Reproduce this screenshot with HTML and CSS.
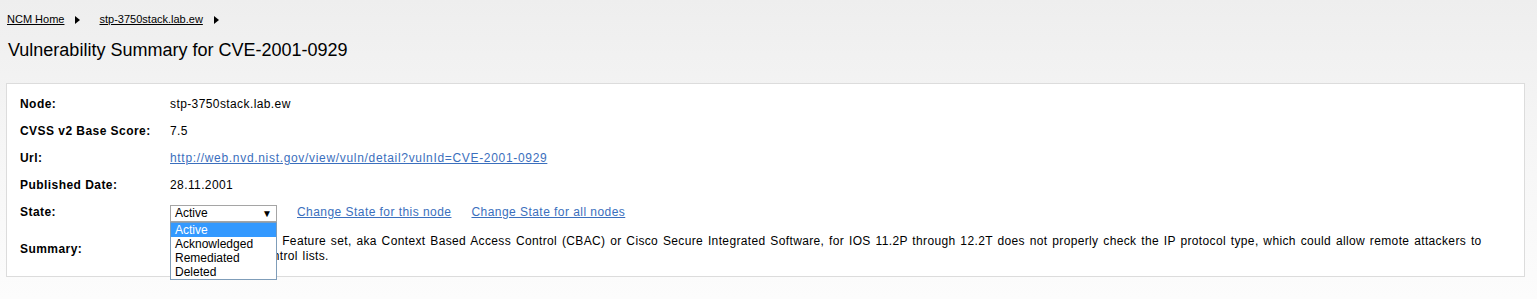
FILE: index.html
```html
<!DOCTYPE html>
<html>
<head>
    <title>Vulnerability Summary for CVE-2001-0929</title>
    <link rel="stylesheet" href="styles.css">
</head>
<body>
    <div class="breadcrumb">
        <a href="#">NCM Home</a><span class="crumb-arrow"></span>
        <a href="#">stp-3750stack.lab.ew</a><span class="crumb-arrow"></span>
    </div>

    <h1>Vulnerability Summary for CVE-2001-0929</h1>

    <div class="summary-box">
        <table class="details">
            <tr>
                <th>Node:</th>
                <td>stp-3750stack.lab.ew</td>
            </tr>
            <tr>
                <th>CVSS v2 Base Score:</th>
                <td>7.5</td>
            </tr>
            <tr>
                <th>Url:</th>
                <td><a class="link url-link" href="#">http://web.nvd.nist.gov/view/vuln/detail?vulnId=CVE-2001-0929</a></td>
            </tr>
            <tr>
                <th>Published Date:</th>
                <td>28.11.2001</td>
            </tr>
            <tr>
                <th>State:</th>
                <td>
                    <div class="state-row">
                        <div class="select-wrap">
                            <div class="select">
                                <span>Active</span>
                                <span class="select-arrow">&#9660;</span>
                            </div>
                            <ul class="select-list">
                                <li class="selected">Active</li>
                                <li>Acknowledged</li>
                                <li>Remediated</li>
                                <li>Deleted</li>
                            </ul>
                        </div>
                        <a class="link" href="#">Change State for this node</a>
                        <a class="link" href="#">Change State for all nodes</a>
                    </div>
                </td>
            </tr>
            <tr class="summary-row">
                <th>Summary:</th>
                <td>Cisco IOS Firewall Feature set, aka Context Based Access Control (CBAC) or Cisco Secure Integrated Software, for IOS 11.2P through 12.2T does not properly check the IP protocol type, which could allow remote attackers to bypass access control lists.</td>
            </tr>
        </table>
    </div>
</body>
</html>
```

FILE: styles.css
```css
body {
    font-family: "Liberation Sans", Arial, sans-serif;
    font-size: 12px;
    color: #000;
    margin: 0;
    padding: 0 12px 0 6px;
    min-height: 299px;
    background: linear-gradient(to bottom, #eeeeee 0%, #f6f6f6 50%, #fcfcfc 100%);
}
.breadcrumb {
    font-size: 11px;
    padding: 12px 0 0 1px;
    height: 16px;
    line-height: 14px;
}
.breadcrumb a {
    color: #000;
    text-decoration: underline;
}
.crumb-arrow {
    display: inline-block;
    width: 0;
    height: 0;
    border-top: 4px solid transparent;
    border-bottom: 4px solid transparent;
    border-left: 5px solid #000;
    margin: 0 16px 0 11px;
    vertical-align: -1px;
}
h1 {
    font-size: 18px;
    font-weight: normal;
    margin: 0;
    padding: 12px 0 0 2px;
    height: 43px;
    line-height: 20px;
}
.summary-box {
    background-color: #fff;
    border: 1px solid #dcdcdc;
    padding: 7px 13px 9px;
}
.details {
    border-collapse: collapse;
    width: 100%;
}
.details th {
    text-align: left;
    font-weight: bold;
    width: 150px;
    padding: 6px 0;
    line-height: 15px;
    letter-spacing: 0.45px;
    vertical-align: middle;
}
.details td {
    padding: 6px 0;
    line-height: 15px;
    letter-spacing: 0.4px;
    vertical-align: middle;
}
.summary-row th,
.summary-row td {
    padding: 8px 0 3px;
}
.summary-row td {
    letter-spacing: 0.36px;
    word-spacing: 1.1px;
}
.link {
    color: #3b6fbd;
    text-decoration: underline;
    letter-spacing: 0.45px;
}
.url-link {
    letter-spacing: 0.68px;
}
.state-row {
    display: flex;
    align-items: center;
    gap: 18px;
}
.state-row .link {
    margin-left: 2px;
}
.select-wrap {
    position: relative;
    width: 107px;
    margin: 0 0 -2px;
    letter-spacing: 0;
}
.select {
    box-sizing: border-box;
    height: 17px;
    border: 1px solid #a5a5a5;
    background: #fff;
    display: flex;
    justify-content: space-between;
    align-items: center;
    padding: 0 4px 0 4px;
    line-height: 15px;
}
.select-arrow {
    font-size: 10px;
}
.select-list {
    position: absolute;
    top: 17px;
    left: 0;
    box-sizing: border-box;
    width: 107px;
    margin: 0;
    padding: 0;
    list-style: none;
    background: #fff;
    border: 1px solid #7f9db9;
    z-index: 10;
}
.select-list li {
    height: 14px;
    line-height: 14px;
    padding-left: 4px;
}
.select-list .selected {
    background-color: #3399ff;
    color: #fff;
}
```
